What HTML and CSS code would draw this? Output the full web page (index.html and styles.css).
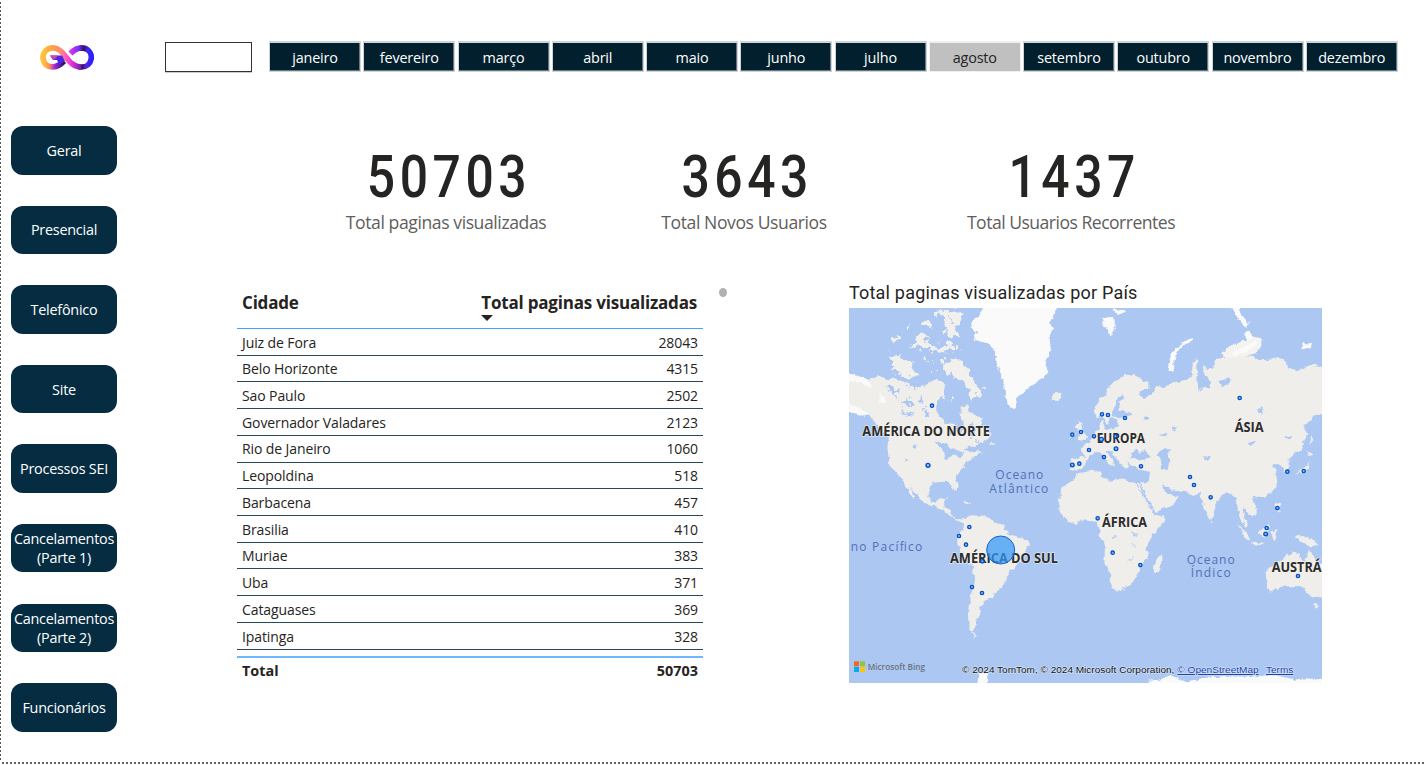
FILE: index.html
```html
<!DOCTYPE html>
<html lang="pt-BR">
<head>
<meta charset="utf-8">
<title>Painel do site</title>
<link rel="stylesheet" href="styles.css">
</head>
<body>
<div class="page">
  <header class="top">
    <svg class="logo" viewBox="0 0 54 25" width="54" height="25">
      <defs>
        <linearGradient id="ga" x1="0" y1="0" x2="1" y2="0"><stop offset="0" stop-color="#ffc53a"/><stop offset=".3" stop-color="#ff9a48"/><stop offset=".48" stop-color="#ff8c78"/><stop offset=".68" stop-color="#ff3fe0"/><stop offset="1" stop-color="#7a1cb0"/></linearGradient>
        <linearGradient id="gb" x1="0" y1="0" x2="1" y2="0"><stop offset="0" stop-color="#7d22c0"/><stop offset=".35" stop-color="#32145c"/><stop offset=".6" stop-color="#5a24e8"/><stop offset="1" stop-color="#2a20ff"/></linearGradient>
        <linearGradient id="gc" x1="0" y1="0" x2="1" y2="0"><stop offset="0" stop-color="#ffc53a"/><stop offset=".3" stop-color="#ff8f58"/><stop offset=".55" stop-color="#a32ad8"/><stop offset="1" stop-color="#241266"/></linearGradient>
        <linearGradient id="gd" x1="0" y1="0" x2="1" y2="0"><stop offset="0" stop-color="#d632f0"/><stop offset=".5" stop-color="#7b2cff"/><stop offset=".8" stop-color="#32145c"/><stop offset="1" stop-color="#3420f0"/></linearGradient>
      </defs>
      <g fill="none" stroke-width="5.600">
        <path d="M3 13Q4 22 13 22Q19 21.500 24 16" stroke="url(#gc)"/>
        <path d="M38 22Q40 22 41.500 22A9.600 9.600 0 0 0 45 3.400" stroke="url(#gb)"/>
        <path d="M30.500 8.500Q36 2.900 41.500 2.900Q45 3 47 4.500" stroke="url(#gd)"/>
        <path d="M2.900 14C2.500 6 8 2.900 13 2.900C25 3 27 22 41 22" stroke="url(#ga)"/>
      </g>
      <path d="M10 10.500H22L25 16 19 19.500 17 15H13Z" fill="#5322e8"/>
      <path d="M10 10.500H18L14 15Z" fill="#d94a91"/>
    </svg>
    <div class="year"></div>
    <nav class="months">
      <button>janeiro</button><button>fevereiro</button><button>março</button><button>abril</button><button>maio</button><button>junho</button><button>julho</button><button class="on">agosto</button><button>setembro</button><button>outubro</button><button>novembro</button><button>dezembro</button>
    </nav>
  </header>
  <div class="body">
    <aside class="side">
      <button>Geral</button><button>Presencial</button><button>Telefônico</button><button>Site</button><button>Processos SEI</button><button>Cancelamentos<br>(Parte 1)</button><button>Cancelamentos<br>(Parte 2)</button><button>Funcionários</button>
    </aside>
    <main class="main">
      <section class="kpis">
        <div class="kpi k1"><b>50703</b><span>Total paginas visualizadas</span></div>
        <div class="kpi k2"><b>3643</b><span>Total Novos Usuarios</span></div>
        <div class="kpi k3"><b>1437</b><span>Total Usuarios Recorrentes</span></div>
      </section>
      <section class="panels">
        <div class="table">
          <div class="thead"><span>Cidade</span><span class="sorted">Total paginas visualizadas<svg width="12" height="6" viewBox="0 0 12 6"><path d="M0 0H12L6 6Z" fill="#252423"/></svg></span></div>
          <div class="row"><span>Juiz de Fora</span><i>28043</i></div>
          <div class="row"><span>Belo Horizonte</span><i>4315</i></div>
          <div class="row"><span>Sao Paulo</span><i>2502</i></div>
          <div class="row"><span>Governador Valadares</span><i>2123</i></div>
          <div class="row"><span>Rio de Janeiro</span><i>1060</i></div>
          <div class="row"><span>Leopoldina</span><i>518</i></div>
          <div class="row"><span>Barbacena</span><i>457</i></div>
          <div class="row"><span>Brasilia</span><i>410</i></div>
          <div class="row"><span>Muriae</span><i>383</i></div>
          <div class="row"><span>Uba</span><i>371</i></div>
          <div class="row"><span>Cataguases</span><i>369</i></div>
          <div class="row"><span>Ipatinga</span><i>328</i></div>
          <div class="total"><span>Total</span><span>50703</span></div>
        </div>
        <div class="thumb"></div>
        <div class="mapbox">
          <h2>Total paginas visualizadas por País</h2>
          <svg class="map" viewBox="0 24 1419 1125" width="473" height="375" preserveAspectRatio="none">
            <defs>
              <filter id="rough" filterUnits="userSpaceOnUse" x="-30" y="-10" width="1480" height="1190"><feTurbulence type="fractalNoise" baseFrequency=".06" numOctaves="3" seed="4"/><feDisplacementMap in="SourceGraphic" scale="16" xChannelSelector="R" yChannelSelector="G"/></filter>
              <filter id="broken" filterUnits="userSpaceOnUse" x="90" y="-10" width="360" height="520"><feTurbulence type="fractalNoise" baseFrequency=".045" numOctaves="3" seed="9"/><feDisplacementMap in="SourceGraphic" scale="55" xChannelSelector="R" yChannelSelector="G"/></filter>
            </defs>
            <rect y="24" width="1419" height="1125" fill="#abc7f2"/>
            <g filter="url(#rough)">
              <g fill="#f0eeea">
                <path d="M-30 215L0 220 30 228 60 240 75 230 100 228 115 240 130 232 150 240 170 245 190 255 215 262 240 250 265 243 290 250 285 275 295 300 275 290 262 310 262 330 275 350 290 368 315 372 325 395 335 405 340 385 345 370 335 350 335 320 355 315 362 335 378 345 395 355 400 375 415 390 425 405 420 415 395 430 380 440 360 440 345 450 365 455 385 452 400 458 380 470 355 482 345 500 325 525 322 540 326 560 318 574 308 555 300 545 270 546 250 550 240 570 235 590 245 608 262 610 270 595 292 592 288 610 283 622 305 630 308 645 320 655 345 655 365 645 400 648 425 655 440 670 465 680 475 700 500 708 535 720 540 735 525 760 515 785 480 815 470 845 450 870 435 880 435 890 410 898 405 915 390 920 395 940 380 960 380 980 370 995 390 1010 375 1005 362 990 360 940 365 890 375 840 372 800 345 775 325 735 325 710 340 690 345 670 325 662 300 642 280 630 260 618 235 615 215 600 200 580 183 562 200 598 185 585 165 550 150 525 125 500 118 470 115 440 120 410 100 395 80 370 60 345 30 335-30 320Z"/>
                <path d="M428 425L440 430 432 437 424 434ZM250 243L270 240 272 262 255 265Z"/>
                <path d="M605 290L615 280 635 278 640 290 625 303 610 300Z"/>
                <path d="M738 350L736 330 748 300 768 290 778 265 803 240 828 225 858 222 873 235 898 250 898 270 873 270 868 285 888 300 903 285 918 275 923 258 948 262 978 245 1008 240 1028 235 1030 200 1035 182 1045 182 1045 220 1040 240 1050 272 1062 262 1083 265 1086 245 1063 220 1063 195 1078 210 1093 200 1098 180 1118 178 1150 165 1178 165 1208 170 1228 178 1248 180 1288 175 1308 185 1318 205 1348 210 1378 195 1408 200 1440 200 1440 340 1398 345 1378 370 1365 380 1375 400 1368 420 1358 450 1338 460 1318 475 1320 505 1308 518 1298 500 1290 490 1268 490 1283 520 1283 560 1268 580 1248 590 1213 585 1208 600 1223 620 1223 640 1208 650 1193 635 1180 620 1186 655 1200 680 1193 685 1178 660 1168 630 1158 590 1138 575 1123 585 1098 615 1093 640 1086 660 1078 650 1058 600 1053 575 1030 590 1008 575 978 572 948 560 938 545 945 575 958 580 988 590 973 615 923 635 913 630 898 600 873 570 863 550 895 545 905 525 900 512 870 510 850 495 835 485 840 500 830 510 815 490 800 470 778 452 770 455 792 480 795 500 783 490 765 468 750 455 735 458 715 475 705 500 680 512 665 510 665 475 708 470 695 445 715 430 738 400 753 390 753 370 760 360 768 375 765 390 793 388 808 375 805 360 785 350 773 375 763 355 750 350Z"/>
                <path d="M708 515L748 510 758 530 788 545 808 535 848 545 860 552 878 585 903 620 918 648 948 645 943 665 918 700 898 725 893 750 898 775 873 795 868 820 853 845 828 865 798 870 788 860 783 820 766 790 768 735 753 710 750 680 743 665 708 658 675 673 650 658 632 635 630 600 640 565 665 540 690 520Z"/>
                <path d="M925 770L940 765 940 785 925 815 912 820 912 800ZM680 380L690 360 697 370 700 395 715 415 705 422 685 420 692 400ZM662 400L678 395 675 412 660 412ZM1165 673L1185 690 1205 715 1205 725 1190 715ZM1210 728L1240 730 1240 736 1210 733ZM1230 695L1255 675 1262 685 1250 710 1232 705ZM1265 695L1290 690 1275 705 1280 720 1268 715ZM1278 605L1290 610 1292 640 1282 630ZM1335 705L1360 710 1395 720 1412 740 1380 738 1355 722ZM1250 815L1275 795 1300 780 1315 765 1335 755 1355 760 1350 775 1368 785 1380 750 1390 760 1400 785 1440 795 1440 890 1398 893 1375 880 1365 860 1338 858 1300 860 1260 875 1255 855ZM1395 912L1410 915 1400 925ZM1355 512L1375 495 1382 478 1378 500 1365 518 1340 520ZM1380 435L1388 405 1390 420ZM1375 450L1392 462 1380 468ZM300 590L340 600 325 596ZM342 605L370 607 355 612ZM1084 662L1092 660 1092 668Z"/>
              </g>
              <g fill="#fafafa">
                <path d="M405 10L395 45 370 65 365 85 385 95 375 115 395 125 420 130 440 160 445 195 455 220 465 250 468 280 478 315 490 325 500 322 505 295 520 280 540 262 565 245 585 235 598 215 590 190 600 170 605 140 600 110 615 85 600 70 612 50 628 10Z"/>
                <path d="M0 220L50 238 70 260 60 265 30 245 0 245ZM0 310L30 325 65 345 50 348 0 335ZM90 280L105 290 108 312 95 310ZM760 55L795 50 800 80 785 110 775 95 765 75ZM795 28L830 30 830 40 805 48ZM955 210L965 165 985 140 1030 110 1032 120 990 145 978 175 970 212ZM1150 24L1170 24 1178 45 1200 70 1190 82 1180 70 1165 60ZM1360 130L1390 130 1385 145 1360 145ZM898 1142L930 1140 965 1125 1010 1145 1060 1135 1130 1128 1200 1130 1270 1125 1350 1140 1450 1130 1450 1170 898 1170ZM392 1115L416 1115 412 1170 386 1170Z"/>
                <path d="M1118 155L1150 135 1190 120 1195 95 1210 110 1240 115 1240 140 1210 165 1130 175Z" fill="#f4f3f0"/><path d="M1150 160L1185 140 1230 118 1210 145 1160 168ZM1188 95L1205 95 1210 115 1192 118Z"/>
              </g>
              <g fill="#abc7f2">
                <path d="M812 330L810 305 825 295 822 282 808 290 800 315 790 335 795 350 820 352 850 345 845 338ZM842 475L848 455 865 448 870 458 885 450 895 455 905 475 880 480 860 478ZM930 455L945 443 965 450 955 460 962 480 955 510 938 505 940 485 925 468ZM868 545L878 570 893 600 915 630 905 615 885 575 873 548ZM845 455L842 465 850 465ZM260 425L285 430 300 440 325 450 345 460 330 475 318 460 305 468 290 480 288 460 275 445ZM1112 240L1145 232 1140 255 1115 265ZM1222 325L1245 322 1240 345 1225 335ZM1175 375L1200 368 1195 378ZM930 405L955 398 945 410ZM1055 470L1085 468 1075 480ZM1195 430L1225 420 1205 438ZM1305 410L1330 405 1320 418ZM190 440L205 432 195 448ZM168 480L182 482 170 487ZM885 348L898 352 887 360ZM965 385L985 380 975 393Z"/>
                <path d="M788 708L798 704 800 714 790 716ZM850 695L868 700 862 712 852 708ZM849 722L858 745 852 742ZM835 785L858 772 845 784Z" opacity=".8"/>
              </g>
            </g>
            <g filter="url(#broken)">
              <path fill="#f2f0ed" d="M118 165L155 162 168 185 200 205 210 235 190 240 160 222 130 220 140 200 118 190ZM128 122L148 100 155 112 145 124ZM180 130L200 125 215 100 240 105 230 122 250 135 280 138 320 134 322 150 270 155 220 150ZM215 65L240 65 240 80 218 80ZM255 30L350 28 345 60 325 80 330 110 310 115 290 98 292 75 272 65 278 50ZM165 75L180 72 178 88 168 92ZM225 178L240 176 238 190ZM248 208L262 212 255 228ZM290 172L330 178 345 200 365 218 375 248 398 265 400 280 385 290 385 302 370 295 372 270 350 258 340 235 310 225 288 212 282 190ZM295 290L310 288 312 302Z"/>
              <path fill="#abc7f2" d="M115 268L150 262 145 285 125 282ZM150 295L190 305 200 325 170 315ZM210 290L228 298 218 315ZM155 335L195 342 175 350ZM220 330L240 335 236 350 225 345ZM350 380L380 385 370 400ZM300 390L315 400 305 412ZM360 408L385 415 365 422ZM300 50L315 70 305 85ZM180 262L205 270 190 276Z"/>
            </g>
            <g class="land-label">
              <text x="40" y="408" textLength="383" lengthAdjust="spacingAndGlyphs">AMÉRICA DO NORTE</text>
              <text x="743" y="428" textLength="145" lengthAdjust="spacingAndGlyphs">EUROPA</text>
              <text x="1157" y="395" textLength="87" lengthAdjust="spacingAndGlyphs">ÁSIA</text>
              <text x="303" y="789" textLength="324" lengthAdjust="spacingAndGlyphs">AMÉRICA DO SUL</text>
              <text x="759" y="681" textLength="135" lengthAdjust="spacingAndGlyphs">ÁFRICA</text>
              <text x="1268" y="816" textLength="150" lengthAdjust="spacingAndGlyphs">AUSTRÁ</text>
            </g>
            <g class="sea-label">
              <text x="439" y="538" textLength="144">Oceano</text>
              <text x="421" y="579" textLength="177">Atlântico</text>
              <text x="5" y="752" textLength="215">no Pacífico</text>
              <text x="1013" y="791" textLength="144">Oceano</text>
              <text x="1025" y="832" textLength="120">Índico</text>
            </g>
            <g class="pins">
              <circle cx="249" cy="317" r="5"/><circle cx="237" cy="496" r="6"/><circle cx="670" cy="404" r="5"/><circle cx="696" cy="396" r="5"/><circle cx="720" cy="450" r="5"/><circle cx="670" cy="495" r="5.500"/><circle cx="691" cy="491" r="5"/>
              <circle cx="759" cy="343" r="5"/><circle cx="777" cy="345" r="5"/><circle cx="828" cy="354" r="5"/><circle cx="735" cy="409" r="5"/><circle cx="757" cy="418" r="6"/><circle cx="799" cy="409" r="5"/><circle cx="801" cy="446" r="5.500"/><circle cx="765" cy="471" r="5"/><circle cx="876" cy="499" r="5"/><circle cx="1023" cy="531" r="5"/><circle cx="1035" cy="555" r="5"/><circle cx="1085" cy="592" r="5"/><circle cx="1172" cy="294" r="5"/><circle cx="1315" cy="515" r="5"/><circle cx="1364" cy="513" r="5"/>
              <circle cx="361" cy="681" r="5"/><circle cx="330" cy="708" r="5"/><circle cx="351" cy="734" r="5"/><circle cx="400" cy="784" r="5"/><circle cx="369" cy="861" r="5"/><circle cx="399" cy="879" r="5"/>
              <circle cx="746" cy="655" r="5"/><circle cx="791" cy="758" r="5"/><circle cx="874" cy="795" r="5"/><circle cx="1285" cy="624" r="5"/><circle cx="1253" cy="684" r="5"/><circle cx="1250" cy="702" r="5.500"/><circle cx="1347" cy="828" r="5"/>
            </g>
            <circle cx="455" cy="750" r="42" fill="#3399f8" fill-opacity=".72" stroke="#1463cf" stroke-width="3"/>
            <path fill="#f26522" d="M15 1084h15v15H15z"/><path fill="#8dc63f" d="M33 1084h15v15H33z"/><path fill="#00aeef" d="M15 1101h15v15H15z"/><path fill="#ffc20e" d="M33 1101h15v15H33z"/>
            <text class="bing" x="56" y="1110" textLength="172" lengthAdjust="spacingAndGlyphs">Microsoft Bing</text>
            <g class="credit">
              <text x="339" y="1119" textLength="637" lengthAdjust="spacingAndGlyphs">© 2024 TomTom, © 2024 Microsoft Corporation,</text>
              <text class="link" x="985" y="1119" textLength="244" lengthAdjust="spacingAndGlyphs">© OpenStreetMap</text>
              <text class="link" x="1251" y="1119" textLength="82" lengthAdjust="spacingAndGlyphs">Terms</text>
            </g>
          </svg>
        </div>
      </section>
    </main>
  </div>
</div>
</body>
</html>
```
FILE: styles.css
```css
* { box-sizing: border-box; }
body { margin: 0; background: #fff; color: #252423; font-family: "Open Sans", "Noto Sans", sans-serif; overflow: hidden; }
button { font: inherit; border: 0; padding: 0; margin: 0; color: #fff; white-space: nowrap; }
.page {
  width: 1426px; height: 765px;
  background:
    repeating-linear-gradient(180deg, #555 0 2px, #fff 2px 4px) 0 2px / 1px 760px no-repeat,
    repeating-linear-gradient(90deg, #666 0 2px, #fff 2px 4px) 2px 762px / 1424px 2px no-repeat;
}
.top { display: flex; height: 126px; padding: 41px 0 0 40px; align-items: flex-start; }
.logo { margin: 4px 71px 0 0; }
.year { width: 87px; height: 30px; margin-top: 1px; border: 1px solid #333; box-shadow: 0 1px #ccc; }
.months { display: flex; gap: 2.25px; margin-left: 17px; }
.months button { width: 92px; height: 31px; border: 1px solid #ced5d8; border-top-width: 2px; background: #021f2e; font-size: 14.4px; letter-spacing: -.16px; line-height: 27px; box-shadow: inset -1px -1px #667983; padding-top: 1px; }
.months .on { background: #c0c0c0; color: #252423; border-color: #f0f0f0; box-shadow: none; }
.body { display: flex; }
.side { width: 237px; padding-left: 11px; display: flex; flex-direction: column; gap: 31.1px; }
.side button { width: 106px; height: 48.5px; border-radius: 12px; background: #062c42; font-size: 14.4px; letter-spacing: -.24px; line-height: 19px; }
.main { width: 1189px; }
.kpis { display: flex; height: 159px; padding-left: 108px; }
.kpi { display: flex; flex-direction: column; align-items: center; white-space: nowrap; }
.kpi b { font: 500 60px/70px Roboto, sans-serif; letter-spacing: 5.5px; margin: 16px -5.5px 0 0; height: 69px; transform: scaleX(.83); }
.kpi span { font-size: 17.6px; line-height: 22px; color: #605e5c; letter-spacing: -.42px; }
.k1 { width: 202px; }
.k2 { width: 166px; margin-left: 114px; }
.k3 { width: 208px; margin-left: 140px; }
.k3 span { letter-spacing: -.52px; }
.panels { display: flex; align-items: flex-start; }
.table { width: 466px; }
.thead { display: flex; justify-content: space-between; height: 44px; padding: 6px 6px 0 5px; border-bottom: 1px solid #41a4ff; font-weight: 700; font-size: 17px; line-height: 24px; letter-spacing: -.2px; }
.sorted { display: flex; flex-direction: column; }
.row { display: flex; justify-content: space-between; height: 26.72px; padding: .6px 5px 0; border-bottom: 1px solid #26495c; font-size: 14px; line-height: 25px; letter-spacing: -.1px; }
.row i { font-style: normal; }
.total { display: flex; justify-content: space-between; margin-top: 6.4px; border-top: 2px solid #6cb8ff; padding: 0 5px; font-weight: 700; font-size: 14.4px; line-height: 26px; letter-spacing: 0; }
.thumb { width: 8px; height: 9px; margin: 3px 0 0 16px; border-radius: 50%; background: #b3b0ad; }
.mapbox { margin-left: 122px; }
.mapbox h2 { margin: 0; height: 23px; font: 400 18px/16px Roboto, sans-serif; white-space: nowrap; letter-spacing: .2px; }
.map { display: block; overflow: hidden; }
.land-label { font-size: 41px; font-weight: 700; fill: #2c2c2c; stroke: #f5f4f1; stroke-width: 5px; stroke-opacity: .65; paint-order: stroke; }
.sea-label { font-size: 36px; fill: #5370b8; font-weight: 500; }
.pins { fill: #7dbaf5; stroke: #0750c4; stroke-width: 4px; }
.bing { font-size: 29px; fill: #6d737d; font-weight: 600; }
.credit { font: 29px "Liberation Sans", Arial, sans-serif; fill: #111; stroke: #dce7fa; stroke-width: 3px; paint-order: stroke; }
.link { fill: #1b3fa8; text-decoration: underline; }
```
